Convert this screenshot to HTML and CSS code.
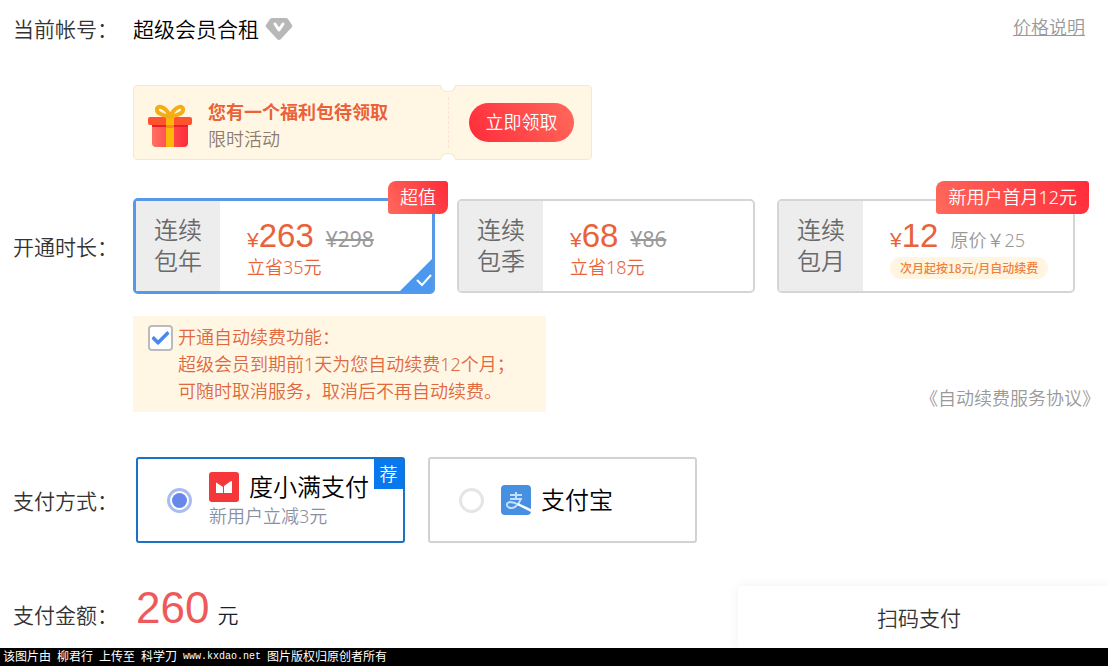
FILE: index.html
```html
<!DOCTYPE html>
<html lang="zh-CN">
<head>
  <meta charset="UTF-8">
  <title>超级会员</title>
  <link rel="stylesheet" href="styles.css">
</head>
<body>

<main>
  <!-- 当前帐号 -->
  <div class="row account">
    <span class="label">当前帐号：</span>
    <span class="name">超级会员合租</span>
    <svg class="vip" width="28" height="24" viewBox="0 0 28 24">
      <path d="M7 1h14q1 0 2 1l4 6q1 1 0 2L16 22q-2 2-4 0L1 10q-1-1 0-2l4-6q1-1 2-1z" fill="#b8b8b8"/>
      <path d="M10 7l4 6 4-6" fill="none" stroke="#fff" stroke-width="3" stroke-linecap="round" stroke-linejoin="round"/>
    </svg>
    <a class="price-link" href="#">价格说明</a>
  </div>

  <!-- 福利包 -->
  <div class="coupon">
    <svg class="gift" width="44" height="44" viewBox="0 0 44 44">
      <defs>
        <linearGradient id="box" x1="0" x2="1">
          <stop offset="0" stop-color="#ff7062"/>
          <stop offset="1" stop-color="#ff2b39"/>
        </linearGradient>
      </defs>
      <path d="M4 18h36v21q0 4-4 4H8q-4 0-4-4z" fill="url(#box)"/>
      <path d="M4 20h36v3H4z" fill="#e9202c"/>
      <rect x="0" y="13" width="44" height="8" rx="2" fill="#ff5330"/>
      <path d="M18 13h8v30h-8z" fill="#ffb60a"/>
      <path d="M18 21h8v3h-8z" fill="#f98a18"/>
      <path d="M22 12C17 1 8 1 9 6c0 4 6 5 13 7C27 1 36 1 35 6c0 4-6 5-13 7" fill="none" stroke="#f5ad16" stroke-width="4" stroke-linejoin="round"/>
    </svg>
    <div class="coupon-text">
      <strong>您有一个福利包待领取</strong>
      <span>限时活动</span>
    </div>
    <div class="coupon-action">
      <button type="button">立即领取</button>
    </div>
  </div>

  <!-- 开通时长 -->
  <div class="row plans">
    <span class="label">开通时长：</span>
    <div class="plan-list">
      <label class="plan active">
        <input type="radio" name="plan" checked>
        <span class="plan-name">连续<br>包年</span>
        <span class="plan-info">
          <span class="price"><i>¥</i><b>263</b><s>¥298</s></span>
          <span class="save">立省35元</span>
        </span>
        <span class="tag">超值</span>
        <svg class="corner" width="32" height="32" viewBox="0 0 32 32">
          <path d="M32 0v32H0z" fill="#4b98f0"/>
          <path d="M17 21l5 5 9-10" fill="none" stroke="#fff" stroke-width="2"/>
        </svg>
      </label>
      <label class="plan">
        <input type="radio" name="plan">
        <span class="plan-name">连续<br>包季</span>
        <span class="plan-info">
          <span class="price"><i>¥</i><b>68</b><s>¥86</s></span>
          <span class="save">立省18元</span>
        </span>
      </label>
      <label class="plan">
        <input type="radio" name="plan">
        <span class="plan-name">连续<br>包月</span>
        <span class="plan-info">
          <span class="price"><i>¥</i><b>12</b><em>原价￥25</em></span>
          <span class="pill">次月起按18元/月自动续费</span>
        </span>
        <span class="tag">新用户首月12元</span>
      </label>
    </div>
  </div>

  <!-- 自动续费 -->
  <div class="renew">
    <div class="notice">
      <input type="checkbox" id="auto" checked>
      <label for="auto">开通自动续费功能：<br>超级会员到期前1天为您自动续费12个月；<br>可随时取消服务，取消后不再自动续费。</label>
    </div>
    <a class="agreement" href="#">《自动续费服务协议》</a>
  </div>

  <!-- 支付方式 -->
  <div class="row pay">
    <span class="label">支付方式：</span>
    <label class="pay-item active">
      <input type="radio" name="pay" checked>
      <span class="pay-body">
        <span class="pay-title">
          <svg width="30" height="30" viewBox="0 0 30 30">
            <rect width="30" height="30" rx="3" fill="#f5363b"/>
            <path d="M7 11q0-1 1 0l6 4v6H7zM15 14l7-5q1 0 1 1v11h-8z" fill="#fff"/>
          </svg>
          度小满支付
        </span>
        <span class="pay-sub">新用户立减3元</span>
      </span>
      <span class="recommend">荐</span>
    </label>
    <label class="pay-item">
      <input type="radio" name="pay">
      <span class="pay-body">
        <span class="pay-title">
          <svg width="30" height="30" viewBox="0 0 30 30">
            <rect width="30" height="30" rx="4" fill="#478fe0"/>
            <path d="M9 10h12M15 7v7M9 14h11q-2 5-6 8-4 2-7 0-3-4 2-5 4 0 9 3" fill="none" stroke="#c3dffb" stroke-width="2"/>
            <path d="M17 18l13 6v3l-14-7z" fill="#fff"/>
          </svg>
          支付宝
        </span>
      </span>
    </label>
  </div>

  <!-- 支付金额 -->
  <div class="row amount">
    <span class="label">支付金额：</span>
    <span class="total">260</span>
    <span class="unit">元</span>
    <div class="scan">扫码支付</div>
  </div>
</main>

<footer>
  <span>该图片由</span>
  <span>柳君行</span>
  <span>上传至</span>
  <span>科学刀</span>
  <span class="site">www.kxdao.net</span>
  <span>图片版权归原创者所有</span>
</footer>

</body>
</html>
```
FILE: styles.css
```css
*,
*::before,
*::after {
  box-sizing: border-box;
}

body {
  margin: 0;
  background: #fff;
  color: #333;
  font-family: "Noto Sans", "Noto Sans CJK SC", sans-serif;
  font-size: 18px;
  font-weight: 350;
  line-height: 27px;
}

main {
  padding-left: 13px;
}

input {
  appearance: none;
  margin: 0;
  flex: none;
}

.row {
  display: flex;
  align-items: center;
}

.label {
  flex: none;
  width: 120px;
  font-size: 21px;
}

/* 帐号 */
.account {
  height: 58px;
  padding-right: 23px;
}

.name {
  color: #000;
  font-size: 21px;
}

.vip {
  margin-left: 6px;
}

.price-link {
  margin-left: auto;
  padding-bottom: 4px;
  color: #999;
}

/* 福利包 */
.coupon {
  position: relative;
  display: flex;
  align-items: center;
  width: 459px;
  height: 75px;
  margin: 27px 0 0 120px;
  padding-left: 14px;
  background: #fff7e4;
  border: 1px solid #fae6d0;
  border-radius: 4px;
}

.coupon::before,
.coupon::after {
  content: "";
  position: absolute;
  right: 135px;
  width: 16px;
  height: 7px;
  background: #fff;
  border: 1px solid #fae6d0;
}

.coupon::before {
  top: -1px;
  border-top: none;
  border-radius: 0 0 8px 8px;
}

.coupon::after {
  bottom: -1px;
  border-bottom: none;
  border-radius: 8px 8px 0 0;
}

.gift {
  margin-top: 6px;
}

.coupon-text {
  flex: 1;
  margin-left: 16px;
  padding-top: 6px;
  color: #8f7b6d;
}

.coupon-text strong {
  display: block;
  color: #ea6238;
  font-weight: 700;
}

.coupon-action {
  width: 143px;
  padding: 6px 0 6px 20px;
  border-left: 1px dashed #fbe0d4;
}

.coupon-action button {
  width: 105px;
  height: 39px;
  padding: 0;
  border: none;
  border-radius: 20px;
  background: linear-gradient(60deg, #ff2b3a, #ff6a5c);
  color: #fff;
  font: inherit;
}

/* 时长 */
.plans {
  margin-top: 38px;
  padding-right: 33px;
}

.plans .label,
.pay .label {
  padding-top: 3px;
}

.plan-list {
  flex: 1;
  display: grid;
  grid-template-columns: 302fr 298fr 298fr;
  align-items: center;
  gap: 22px;
}

.plan {
  position: relative;
  display: flex;
  height: 94px;
  border: 2px solid #d5d5d5;
  border-radius: 5px;
}

.plan.active {
  height: 96px;
  border: 3px solid #5599e8;
}

.plan > input {
  position: absolute;
}

.plan-name {
  display: flex;
  align-items: center;
  justify-content: center;
  width: 84px;
  padding-bottom: 2px;
  background: #ededed;
  color: #6a6a6a;
  font-size: 24px;
  line-height: 31px;
}

.plan-info {
  display: flex;
  flex-direction: column;
  align-items: flex-start;
  padding: 16px 0 0 27px;
  color: #e8633a;
  white-space: nowrap;
}

.price {
  display: flex;
  align-items: baseline;
  height: 37px;
  line-height: 38px;
}

.price i,
.price b {
  font-family: "Liberation Sans", sans-serif;
  font-style: normal;
  font-weight: 400;
}

.price i {
  font-size: 21px;
}

.price b {
  font-size: 33px;
}

.price s,
.price em {
  margin-left: 12px;
  color: #999;
  font-style: normal;
}

.price s {
  font-size: 21px;
  font-weight: 400;
  text-decoration-thickness: 2px;
}

.pill {
  margin-top: 3px;
  padding: 0 10px;
  border-radius: 11px;
  background: #fff5e0;
  color: #f08040;
  font-family: "Noto Sans CJK SC", sans-serif;
  font-size: 12px;
  font-weight: 500;
  line-height: 22px;
}

.tag {
  position: absolute;
  top: -20px;
  right: -16px;
  padding: 0 12px;
  border-radius: 8px 3px 8px 3px;
  background: linear-gradient(60deg, #ff6a5c, #ff2b3a);
  color: #fff;
  line-height: 33px;
}

.corner {
  position: absolute;
  right: 0;
  bottom: 0;
}

/* 自动续费 */
.renew {
  display: flex;
  align-items: flex-end;
  justify-content: space-between;
  margin: 22px 0 0 120px;
  padding-right: 8px;
}

.notice {
  display: flex;
  gap: 5px;
  width: 413px;
  padding: 8px 0 7px 15px;
  background: #fff7e4;
  color: #e0683f;
}

.notice input {
  width: 25px;
  height: 26px;
  margin-top: 1px;
  border: 2px solid #bbb;
  border-radius: 4px;
  background: #fff;
}

.notice input::before {
  content: "";
  display: block;
  width: 17px;
  height: 10px;
  margin: 4px 0 0 2px;
  border: solid #4b88ee;
  border-width: 0 0 4px 4px;
  border-radius: 2px;
  transform: rotate(-45deg);
}

.agreement {
  color: #999;
  text-decoration: none;
}

/* 支付方式 */
.pay {
  margin-top: 45px;
}

.pay .label,
.amount .label {
  width: 123px;
}

.pay-item {
  position: relative;
  display: flex;
  align-items: center;
  width: 269px;
  height: 86px;
  margin-right: 23px;
  padding-left: 29px;
  border: 2px solid #d2d2d2;
  border-radius: 3px;
}

.pay-item.active {
  border-color: #1b73c8;
}

.pay-item input {
  width: 25px;
  height: 25px;
  border: 3px solid #e5e5e5;
  border-radius: 50%;
}

.pay-item input:checked {
  padding: 2px;
  border-color: #a9bcf2;
  background: #6788e8;
  background-clip: content-box;
}

.pay-body {
  margin-left: 17px;
}

.pay-title {
  display: flex;
  align-items: center;
  gap: 10px;
  color: #000;
  font-size: 24px;
  line-height: 32px;
}

.pay-sub {
  display: block;
  color: #8a90a0;
}

.recommend {
  position: absolute;
  top: 0;
  right: 0;
  width: 29px;
  background: #0878ee;
  color: #fff;
  line-height: 30px;
  text-align: center;
}

/* 金额 */
.amount {
  align-items: baseline;
  height: 62px;
  margin-top: 43px;
}

.total {
  color: #ee5a5c;
  font-family: "Liberation Sans", sans-serif;
  font-size: 44px;
  font-weight: 400;
  line-height: 44px;
}

.unit {
  margin-left: 8px;
  color: #123;
  font-size: 21px;
}

.scan {
  align-self: stretch;
  width: 370px;
  margin-left: auto;
  padding-right: 8px;
  box-shadow: 0 0 12px rgba(0, 0, 0, 0.06);
  font-size: 21px;
  line-height: 64px;
  text-align: center;
}

footer {
  position: relative;
  display: flex;
  gap: 6px;
  padding-left: 3px;
  background: #000;
  color: #fff;
  font-size: 12px;
  font-weight: 400;
  line-height: 18px;
}

.site {
  font-family: "Liberation Mono", monospace;
  font-size: 10px;
}
```
